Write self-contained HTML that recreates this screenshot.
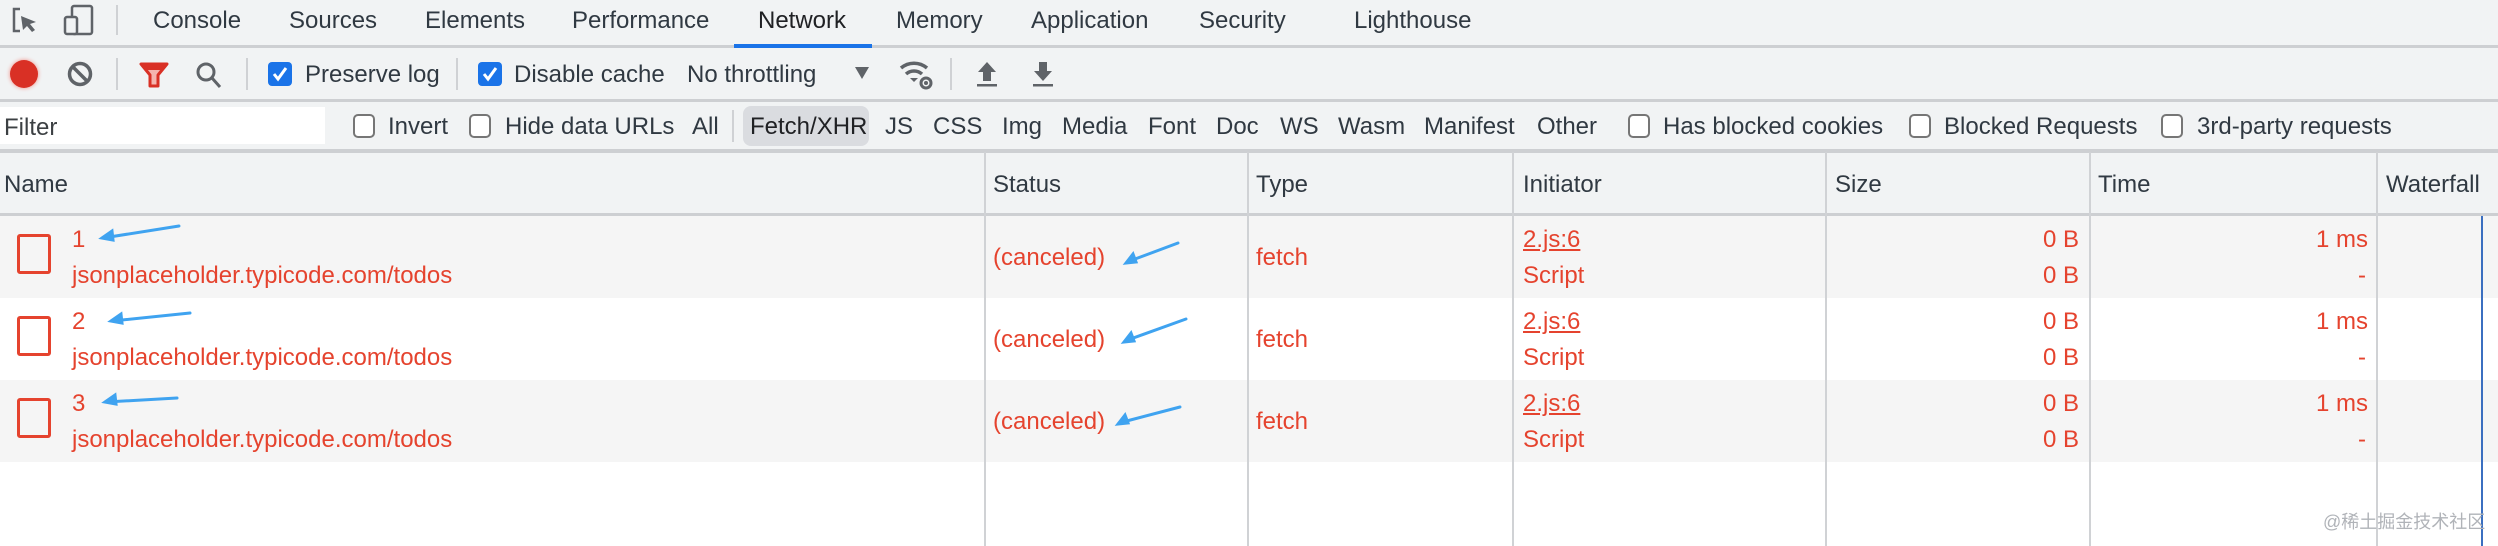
<!DOCTYPE html>
<html><head><meta charset="utf-8"><style>
*{margin:0;padding:0;box-sizing:border-box}
body{width:2498px;height:546px;overflow:hidden;background:#fff;font-family:"Liberation Sans",Arial,sans-serif;font-size:24px;color:#303942;position:relative}
.a{position:absolute;white-space:nowrap}
.bar{position:absolute;left:0;width:2498px;background:#f1f3f4}
.t{position:absolute;transform:translateY(-50%);white-space:nowrap}
.sep{position:absolute;width:2px;background:#cfd1d4}
.cb{position:absolute;width:22px;height:24px;border:2px solid #767676;border-radius:5px;background:#fff}
.cbc{position:absolute;width:24px;height:24px;border-radius:4px;background:#1a73e8}
.r{color:#e5432e}
.row{position:absolute;left:0;width:2498px}
.vl{position:absolute;width:2px;background:#d0d2d5;top:152px;height:394px}
</style></head><body>
<!-- tab bar -->
<div class="bar" style="top:0;height:46px"></div>
<div class="a" style="top:45px;left:0;width:2498px;height:3px;background:#cdcfd2"></div>
<svg class="a" style="left:10px;top:6px" width="30" height="30" viewBox="0 0 30 30"><path d="M10 3H4v22h6" fill="none" stroke="#5f6368" stroke-width="2.5"/><path d="M11 10l15 6-6 2 5 6-3 2-5-6-4 4z" fill="#5f6368"/></svg>
<svg class="a" style="left:62px;top:4px" width="34" height="32" viewBox="0 0 34 32"><rect x="10" y="2" width="20" height="28" rx="2" fill="none" stroke="#5f6368" stroke-width="2.5"/><rect x="3" y="13" width="12" height="17" rx="2" fill="#f1f3f4" stroke="#5f6368" stroke-width="2.5"/></svg>
<div class="sep" style="left:116px;top:5px;height:30px"></div>
<div class="t" style="left:153px;top:21px">Console</div>
<div class="t" style="left:289px;top:21px">Sources</div>
<div class="t" style="left:425px;top:21px">Elements</div>
<div class="t" style="left:572px;top:21px">Performance</div>
<div class="t" style="left:758px;top:21px;color:#202124">Network</div>
<div class="a" style="left:734px;top:44px;width:138px;height:4px;background:#1a73e8"></div>
<div class="t" style="left:896px;top:21px">Memory</div>
<div class="t" style="left:1031px;top:21px">Application</div>
<div class="t" style="left:1199px;top:21px">Security</div>
<div class="t" style="left:1354px;top:21px">Lighthouse</div>
<!-- toolbar -->
<div class="bar" style="top:48px;height:52px"></div>
<div class="a" style="top:99px;left:0;width:2498px;height:3px;background:#cdcfd2"></div>
<div class="a" style="left:10px;top:60px;width:28px;height:28px;border-radius:50%;background:#d93025;box-shadow:0 0 4px #f28b82"></div>
<svg class="a" style="left:67px;top:61px" width="26" height="26" viewBox="0 0 26 26"><circle cx="13" cy="13" r="10.5" fill="none" stroke="#5f6368" stroke-width="3.5"/><path d="M6 6l14 14" stroke="#5f6368" stroke-width="3.5"/></svg>
<div class="sep" style="left:116px;top:58px;height:32px"></div>
<svg class="a" style="left:139px;top:62px" width="30" height="26" viewBox="0 0 30 26"><path d="M2 2h26l-9 11v11h-8V13z" fill="#f4b5ae" stroke="#d93025" stroke-width="3" stroke-linejoin="round"/><path d="M3 3h24l-4 5H7z" fill="#d93025"/></svg>
<svg class="a" style="left:195px;top:61px" width="30" height="30" viewBox="0 0 30 30"><circle cx="11" cy="11" r="8" fill="none" stroke="#5f6368" stroke-width="3"/><path d="M17 17l8 9" stroke="#5f6368" stroke-width="3"/></svg>
<div class="sep" style="left:246px;top:58px;height:32px"></div>
<div class="cbc" style="left:268px;top:62px"></div>
<svg class="a" style="left:268px;top:62px" width="24" height="24" viewBox="0 0 24 24"><path d="M6 12l4 5 8-11" fill="none" stroke="#fff" stroke-width="3"/></svg>
<div class="t" style="left:305px;top:75px">Preserve log</div>
<div class="sep" style="left:456px;top:58px;height:32px"></div>
<div class="cbc" style="left:478px;top:62px"></div>
<svg class="a" style="left:478px;top:62px" width="24" height="24" viewBox="0 0 24 24"><path d="M6 12l4 5 8-11" fill="none" stroke="#fff" stroke-width="3"/></svg>
<div class="t" style="left:514px;top:75px">Disable cache</div>
<div class="t" style="left:687px;top:75px">No throttling</div>
<svg class="a" style="left:855px;top:67px" width="14" height="12" viewBox="0 0 14 12"><path d="M0 0h14L7 12z" fill="#5f6368"/></svg>
<svg class="a" style="left:898px;top:58px" width="36" height="32" viewBox="0 0 36 32"><path d="M3 10a20 20 0 0 1 26 0M8 16a12 12 0 0 1 16 0" fill="none" stroke="#5f6368" stroke-width="3.5"/><path d="M12 20l4 4 4-4z" fill="#5f6368"/><circle cx="28" cy="25" r="5" fill="none" stroke="#5f6368" stroke-width="3"/><circle cx="28" cy="25" r="2" fill="#5f6368"/></svg>
<div class="sep" style="left:950px;top:58px;height:32px"></div>
<svg class="a" style="left:976px;top:60px" width="22" height="28" viewBox="0 0 22 28"><path d="M11 2l9 10h-5v9H7v-9H2z" fill="#5f6368"/><rect x="1" y="24" width="20" height="2.5" fill="#5f6368"/></svg>
<svg class="a" style="left:1032px;top:60px" width="22" height="28" viewBox="0 0 22 28"><path d="M11 21l9-10h-5V2H7v9H2z" fill="#5f6368"/><rect x="1" y="24" width="20" height="2.5" fill="#5f6368"/></svg>
<!-- filter row -->
<div class="bar" style="top:102px;height:48px"></div>
<div class="a" style="top:149px;left:0;width:2498px;height:4px;background:#cdcfd2"></div>
<div class="a" style="left:0;top:107px;width:325px;height:37px;background:#fff"></div>
<div class="t" style="left:4px;top:128px;color:#3c4043">Filter</div>
<div class="cb" style="left:353px;top:114px"></div><div class="t" style="left:388px;top:127px">Invert</div>
<div class="cb" style="left:469px;top:114px"></div><div class="t" style="left:505px;top:127px">Hide data URLs</div>
<div class="t" style="left:692px;top:127px">All</div>
<div class="sep" style="left:732px;top:110px;height:32px"></div>
<div class="a" style="left:743px;top:106px;width:126px;height:40px;border-radius:8px;background:#dadce0"></div>
<div class="t" style="left:750px;top:127px;color:#202124">Fetch/XHR</div>
<div class="t" style="left:885px;top:127px">JS</div>
<div class="t" style="left:933px;top:127px">CSS</div>
<div class="t" style="left:1002px;top:127px">Img</div>
<div class="t" style="left:1062px;top:127px">Media</div>
<div class="t" style="left:1148px;top:127px">Font</div>
<div class="t" style="left:1216px;top:127px">Doc</div>
<div class="t" style="left:1280px;top:127px">WS</div>
<div class="t" style="left:1338px;top:127px">Wasm</div>
<div class="t" style="left:1424px;top:127px">Manifest</div>
<div class="t" style="left:1537px;top:127px">Other</div>
<div class="cb" style="left:1628px;top:114px"></div><div class="t" style="left:1663px;top:127px">Has blocked cookies</div>
<div class="cb" style="left:1909px;top:114px"></div><div class="t" style="left:1944px;top:127px">Blocked Requests</div>
<div class="cb" style="left:2161px;top:114px"></div><div class="t" style="left:2197px;top:127px">3rd-party requests</div>
<!-- header -->
<div class="bar" style="top:153px;height:61px"></div>
<div class="a" style="top:213px;left:0;width:2498px;height:3px;background:#cdcfd2"></div>
<div class="t" style="left:4px;top:185px">Name</div>
<div class="t" style="left:993px;top:185px">Status</div>
<div class="t" style="left:1256px;top:185px">Type</div>
<div class="t" style="left:1523px;top:185px">Initiator</div>
<div class="t" style="left:1835px;top:185px">Size</div>
<div class="t" style="left:2098px;top:185px">Time</div>
<div class="t" style="left:2386px;top:185px">Waterfall</div>
<!-- rows -->
<div class="row" style="top:216px;height:82px;background:#f5f5f5"></div>
<div class="row" style="top:298px;height:82px;background:#fff"></div>
<div class="row" style="top:380px;height:82px;background:#f5f5f5"></div>
<div class="vl" style="left:984px"></div>
<div class="vl" style="left:1247px"></div>
<div class="vl" style="left:1512px"></div>
<div class="vl" style="left:1825px"></div>
<div class="vl" style="left:2089px"></div>
<div class="vl" style="left:2376px"></div>
<div class="a" style="left:2481px;top:216px;width:2px;height:330px;background:#3b6fc0"></div>

<div class="r">
<div class="a" style="left:17px;top:234px;width:34px;height:40px;border:3px solid #e5432e;border-radius:3px"></div>
<div class="t" style="left:72px;top:240px">1</div>
<div class="t" style="left:72px;top:276px">jsonplaceholder.typicode.com/todos</div>
<div class="t" style="left:993px;top:258px">(canceled)</div>
<div class="t" style="left:1256px;top:258px">fetch</div>
<div class="t" style="left:1523px;top:240px;text-decoration:underline">2.js:6</div>
<div class="t" style="left:1523px;top:276px">Script</div>
<div class="t" style="right:419px;top:240px">0 B</div><div class="t" style="right:419px;top:276px">0 B</div>
<div class="t" style="right:130px;top:240px">1 ms</div><div class="t" style="right:132px;top:276px">-</div>

<div class="a" style="left:17px;top:316px;width:34px;height:40px;border:3px solid #e5432e;border-radius:3px"></div>
<div class="t" style="left:72px;top:322px">2</div>
<div class="t" style="left:72px;top:358px">jsonplaceholder.typicode.com/todos</div>
<div class="t" style="left:993px;top:340px">(canceled)</div>
<div class="t" style="left:1256px;top:340px">fetch</div>
<div class="t" style="left:1523px;top:322px;text-decoration:underline">2.js:6</div>
<div class="t" style="left:1523px;top:358px">Script</div>
<div class="t" style="right:419px;top:322px">0 B</div><div class="t" style="right:419px;top:358px">0 B</div>
<div class="t" style="right:130px;top:322px">1 ms</div><div class="t" style="right:132px;top:358px">-</div>

<div class="a" style="left:17px;top:398px;width:34px;height:40px;border:3px solid #e5432e;border-radius:3px"></div>
<div class="t" style="left:72px;top:404px">3</div>
<div class="t" style="left:72px;top:440px">jsonplaceholder.typicode.com/todos</div>
<div class="t" style="left:993px;top:422px">(canceled)</div>
<div class="t" style="left:1256px;top:422px">fetch</div>
<div class="t" style="left:1523px;top:404px;text-decoration:underline">2.js:6</div>
<div class="t" style="left:1523px;top:440px">Script</div>
<div class="t" style="right:419px;top:404px">0 B</div><div class="t" style="right:419px;top:440px">0 B</div>
<div class="t" style="right:130px;top:404px">1 ms</div><div class="t" style="right:132px;top:440px">-</div>
</div>

<svg class="a" style="left:0;top:0" width="2498" height="546">
<g stroke="#3fa3f0" stroke-width="3" stroke-linecap="round" fill="#3fa3f0">
<path d="M103 238L179 226"/><path d="M102 238l10-7 1 9z"/>
<path d="M112 321L190 313"/><path d="M111 321l10-7 1 9z"/>
<path d="M106 402L177 398"/><path d="M105 402l10-7 1 9z"/>
<path d="M1127 262L1178 243"/><path d="M1126 263l7-9 3 8z"/>
<path d="M1125 341L1186 319"/><path d="M1124 342l7-9 3 8z"/>
<path d="M1119 423L1180 407"/><path d="M1118 424l7-9 3 8z"/>
</g></svg>
<div class="a" style="left:2323px;top:508px;font-size:18px;color:#b0b3b8;font-family:'Liberation Sans','Noto Sans CJK SC',sans-serif">@稀土掘金技术社区</div>
</body></html>
